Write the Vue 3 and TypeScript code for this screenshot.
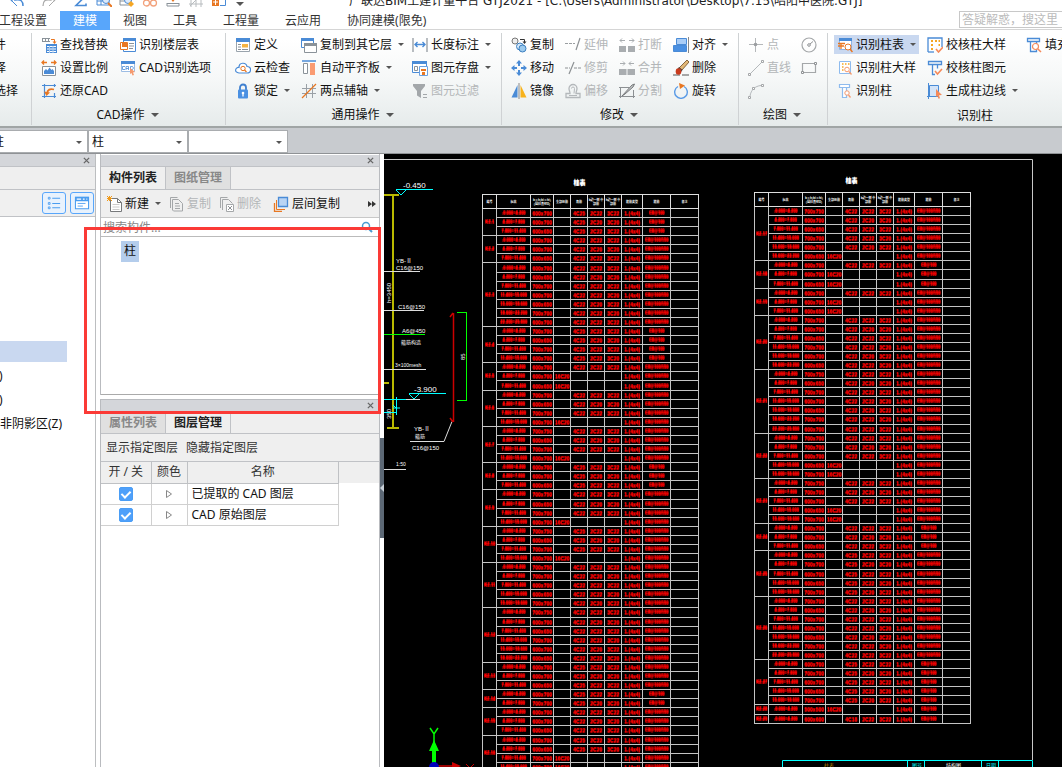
<script setup lang="ts">
import { ref } from 'vue'

interface Tool { icon: string; text?: string; arrow?: boolean; off?: boolean; on?: boolean }
interface Group { key: string; title: string; arrow: boolean; cols: Tool[][] }
interface Row { label?: string; span?: number; cells: string[] }
type Def = [string, number, number[], string, string, string]

const B = '#4a8bd6'
const O = '#e87722'
const G = '#8a9299'
const L = '#b4b8bb'

const icons: Record<string, string> = {
  find: `<path d="M1 1.500h8M1 4.500h8M1.500 1v4M4.500 1v4M7.500 1v4" stroke="${G}" fill="none"/><path d="M10 2.500h3.500v3" stroke="${O}" fill="none"/><path d="M11.500 4.500h4l-2 2.500z" fill="${O}"/><path d="M5 7h11v9H5z" fill="${B}"/><path d="M6 9.500h9M6 12h9M6 14.500h9" stroke="#fff"/><path d="M8.500 9v7M12 9v7" stroke="#a9cbf0"/>`,
  scale: `<path d="M1 2.500h5M10 2.500h5M3 .5l-2 2 2 2M13 .5l2 2-2 2" stroke="${O}" fill="none" stroke-width="1.300"/><path d="M1.500 15.500v-9h13v9z" fill="#fff" stroke="${G}"/><path d="M3 14v-3l2-2 1.500 1.500 2-3 2 2.500 1-1 1.500 2v3z" fill="${B}"/>`,
  restore: `<path d="M3.500 1v14M1 2.500h14M1 13.500h14M13.500 1v3M13.500 10v5" stroke="${B}" stroke-width="1.200" fill="none"/><path d="M13 6.500c-4-1-6.500 0-7 4" stroke="${O}" stroke-width="1.800" fill="none"/><path d="M3 8.500l6 1-3.500 3.500z" fill="${O}"/>`,
  floors: `<path d="M3.500 1.500h12v13h-12z" fill="#fff" stroke="${B}"/><path d="M3 1h13v3H3z" fill="${B}"/><path d="M.5 5.500h7v7h-7z" fill="#fff" stroke="${O}"/><path d="M2 5h5v5H2z" fill="${O}"/><path d="M9 6.500h5M9 9h5M9 11.500h4" stroke="${G}"/>`,
  cadopt: `<path d="M1.500 1.500h13v10h-13z" fill="#fff" stroke="#9dbde4"/><path d="M1 1h14v3H1z" fill="${B}"/><path d="M5 6.500H2.500v3H5M6 10V6.500h2.500V10M6 8.500h2.500M10.500 6.500v3h2l1-1.500-1-1.500z" stroke="${B}" stroke-width=".8" fill="none"/><path d="M10 8l5 4-2 .5 1 2.500-1.500.5-1-2.500-1.500 1z" fill="#f59a6f"/>`,
  define: `<path d="M1.500 2.500h13v12h-13z" fill="#fff" stroke="#9aa4ad"/><path d="M1 1h14v4H1z" fill="${B}"/><path d="M3 7.500h3M3 10h3M3 12.500h3" stroke="${G}"/><path d="M7 7h6v3.500H7z" fill="#f5b342"/><path d="M7 12.500h6" stroke="${G}"/>`,
  cloud: `<path d="M4 13c-5-.3-4-6 0-5.500C4 2 11 2 12 6.500c5 0 4.500 6.500 0 6.500z" fill="#fff" stroke="${B}" stroke-width="1.200"/><circle cx="8" cy="8.500" r="2.200" fill="none" stroke="${O}"/><path d="M9.500 10l2 2" stroke="${O}" stroke-width="1.300"/>`,
  lock: `<path d="M5 7V4.500a3 3 0 0 1 6 0V7" fill="none" stroke="#3f7fcf" stroke-width="1.800"/><rect x="3" y="6.500" width="10" height="9" rx="1" fill="#4a90e2"/><circle cx="8" cy="10" r="1.300" fill="#fff"/><path d="M8 10v3.500" stroke="#fff" stroke-width="1.300"/>`,
  copyfl: `<path d="M.5 1.500h12v9H.5z" fill="#fff" stroke="${B}"/><path d="M0 1h13v3H0z" fill="${B}"/><path d="M3.500 6.500h12v9h-12z" fill="#fff" stroke="${G}"/><path d="M3 6h13v3H3z" fill="${G}"/>`,
  slab: `<path d="M1 1h14" stroke="${B}" stroke-width="1.500"/><path d="M2.500 3.500h4v10h-4z" fill="#fff" stroke="${G}"/><path d="M9 3h5v12H9z" fill="#fa9b72"/>`,
  axis: `<path d="M5.500 1v14M11.500 1v14M1 5.500h14M1 10.500h14" stroke="#9aa0a6"/><path d="M1 15L15 1" stroke="${O}" stroke-width="1.200"/>`,
  dim: `<path d="M1 1v14M15 1v14" stroke="${G}" stroke-width="1.200"/><path d="M3 7.500h10M5.500 5L3 7.500 5.500 10M10.500 5L13 7.500 10.500 10" stroke="${B}" fill="none" stroke-width="1.400"/>`,
  save: `<path d="M.5 1.500h14v11H.5z" fill="#fff" stroke="${B}"/><path d="M0 1h15v3H0z" fill="${B}"/><path d="M2.500 6.500h3v4h-3z" fill="none" stroke="${G}"/><path d="M7.500 6.500h8v9h-8z" fill="#fff" stroke="#6aa0e0"/><path d="M9 9h5v2H9zM10 12h3v3h-3z" fill="${O}"/>`,
  filter: `<path d="M1 1h12v2L9 8v7l-4-2.500V8L1 3z" fill="#a3a7aa"/><path d="M11 11.500h4M11 14.500h4" stroke="#a3a7aa"/>`,
  copy: `<circle cx="4" cy="4" r="3" fill="#eee" stroke="#777"/><path d="M9 2.500h4.500V5" stroke="#333" fill="none"/><path d="M11.500 4.500h4l-2 2.500z" fill="#333"/><circle cx="9" cy="9.500" r="3.500" fill="#d6e9fa" stroke="#3c7fc0"/><circle cx="11.500" cy="11.500" r="3.500" fill="#9dcbee" stroke="#3c7fc0"/>`,
  move: `<path d="M8 0l3 3.500H9V6H7V3.500H5zM8 16l3-3.500H9V10H7v2.500H5zM0 8l3.500-3v2H6v2H3.500v2zM16 8l-3.500-3v2H10v2h2.500v2z" fill="${B}"/>`,
  mirror: `<path d="M6.500 2v12.500H.5z" fill="${B}"/><path d="M8 0v16" stroke="#888"/><path d="M9.500 2v12.500h6z" fill="#f7b21b"/>`,
  extend: `<path d="M0 6.500h10" stroke="#9a9ea1" stroke-dasharray="3 1"/><path d="M15 1L11 13" stroke="#8c9093" stroke-width="1.200"/>`,
  trim: `<path d="M0 8h5M9 8h7" stroke="#8c9093" stroke-dasharray="3 1"/><path d="M9 2L4 14" stroke="#8c9093" stroke-width="1.200"/>`,
  offset: `<path d="M1 14.500v-4h4c0-2-1-3-1-5a4 4 0 0 1 8 0c0 2-1 3-1 5h4v4z" fill="none" stroke="${L}" stroke-width="1.300"/><path d="M4 12.500h8M6.500 5.500a1.500 1.500 0 0 1 3 0c0 2-.5 3-.5 5" fill="none" stroke="${L}"/>`,
  brk: `<path d="M0 9h7v6H0zM9 9h7v6H9z" fill="#a9adb0"/><path d="M1 3.500h5M10 3.500h5M3 1.500l-2 2 2 2M13 1.500l2 2-2 2" stroke="#a9adb0" fill="none"/>`,
  merge: `<path d="M0 9h7.500v6H0zM8.500 9H16v6H8.500z" fill="#a9adb0"/><path d="M1 3.500h5M10 3.500h5M4 1.500l2 2-2 2M12 1.500l-2 2 2 2" stroke="#a9adb0" fill="none"/>`,
  split: `<path d="M0 4.500h10M0 13.500h16M1.500 4v11M14.500 7v8" stroke="#8c9093" fill="none"/><path d="M3 13L13 2l2.500-1L14 4 6 11z" fill="#c4c7c9" stroke="#77797b"/>`,
  align: `<path d="M3.500 1.500h10v6h-10z" fill="#a9cdf7" stroke="${B}"/><path d="M.5 8.500h13v6H.5z" fill="#4a90e2" stroke="${B}"/><path d="M15.500 0v16" stroke="#888"/>`,
  erase: `<path d="M0 15h16" stroke="#555" stroke-dasharray="7 2"/><path d="M14 0l2 2-7 8-3-2z" fill="#e2b877" stroke="#6b4a22" stroke-width=".8"/><path d="M6 7l3.500 3L8 12 4.500 9z" fill="#444"/><ellipse cx="5.500" cy="11.500" rx="2.800" ry="3.200" fill="#c93a1c"/>`,
  rotate: `<path d="M11 3.500A6.300 6.300 0 1 1 5 3.500" fill="none" stroke="#5a9be6" stroke-width="1.400"/><path d="M6 0l6 2.500L7 6z" fill="${O}"/>`,
  point: `<path d="M7.500 1v14M1 7.500h14" stroke="#b5b8ba"/><circle cx="7.500" cy="7.500" r="1.800" fill="#9b9ea1"/>`,
  line: `<path d="M2 14L14 2" stroke="${L}"/><path d="M.5 13.500h2v2h-2zM13.500.5h2v2h-2z" fill="#fff" stroke="#a4a7a9"/>`,
  arc: `<path d="M2 13C3 7 7 3 13 2.500" stroke="${L}" fill="none"/><path d="M.5 13.500h2v2h-2zM4.500 4.500h2v2h-2zM13.500 1.500h2v2h-2z" fill="#fff" stroke="#a4a7a9"/>`,
  circle: `<circle cx="8" cy="8" r="7" fill="none" stroke="#a4a7a9" stroke-width="1.200"/><circle cx="8" cy="8" r="1.300" fill="none" stroke="#8f9295"/><path d="M9 7l3-2.500" stroke="#8f9295"/>`,
  rect: `<path d="M1.500 3.500h13v9h-13z" fill="none" stroke="#a4a7a9" stroke-width="1.200"/><path d="M.5 11.500h2v2h-2zM13.500 2.500h2v2h-2z" fill="#fff" stroke="#8f9295"/>`,
  idtable: `<path d="M2.500 1.500h12v11h-12z" fill="#fff" stroke="#8fb4e2"/><path d="M2 1h13v3H2z" fill="${B}"/><path d="M1 6.500h7M1 9h6M4 6v6" stroke="${O}" stroke-width="1.300"/><circle cx="11" cy="10" r="3" fill="#fff" stroke="${O}"/><path d="M13 12l2.500 3" stroke="${O}" stroke-width="1.500"/>`,
  iddetail: `<path d="M2.500 1.500h11v12h-11z" fill="#fff" stroke="#8ebbee"/><path d="M5 4h1.500M8 4h1.500M11 4h1.500M5 7h1.500M5 10h1.500" stroke="#f5a623" stroke-width="1.500"/><circle cx="10" cy="9.500" r="2.300" fill="#fff" stroke="#f59a6f"/><path d="M12 11.500l2.500 3" stroke="#f59a6f" stroke-width="1.300"/>`,
  idcol: `<path d="M2.500 1.500h10v3h-10zM5.500 4.500h4v10h-4z" fill="#fff" stroke="#8ebbee" stroke-width="1.200"/><circle cx="10" cy="10" r="2.200" fill="#fff" stroke="#f59a6f"/><path d="M11.500 12l2 2.500" stroke="#f59a6f" stroke-width="1.300"/>`,
  ckdetail: `<path d="M1 15V1h14v9" fill="none" stroke="${B}" stroke-width="1.300"/><path d="M1 15h6" stroke="${B}" stroke-width="1.300"/><path d="M4 4h2M8 4h2M11.500 4h1.500M4 8h2M11.500 8H13M4 12h2" stroke="#f5a623" stroke-width="2"/><path d="M9 12l2.500 3L16 10" fill="none" stroke="#f58a5a" stroke-width="1.600"/>`,
  ckelem: `<path d="M1.500 1.500h13v3h-13zM10.500 4.500v4M5.500 4.500v10H8" fill="none" stroke="${B}" stroke-width="1.300"/><path d="M8 11l2.500 3L15 9" fill="none" stroke="#f58a5a" stroke-width="1.600"/>`,
  edge: `<path d="M2.500 2.500h9v11h-9z" fill="#d3e4f8" stroke="${B}"/><path d="M1.500 0v16M0 13.500h12" stroke="${B}"/><path d="M9 6l6 6-3 .3 1 3-1.500.5-1.200-3L9 14z" fill="#f58a5a"/>`,
  fill: `<path d="M1.500 1.500h12v3h-12zM4.500 4.500h6v10h-6z" fill="#fff" stroke="${B}" stroke-width="1.300"/><circle cx="9.500" cy="9.500" r="3" fill="#fff" stroke="#f58a5a" stroke-width="1.200"/><path d="M12 12l3 3" stroke="#f58a5a" stroke-width="1.500"/>`,
  newdoc: `<path d="M3.500 2.500h7l4 4v9h-11z" fill="#fff" stroke="#77797b"/><path d="M10.500 2.500v4h4" fill="none" stroke="#77797b"/><path d="M5.500 8.500h7M5.500 11h7M5.500 13.500h7" stroke="#ccc"/><path d="M0 0l5 5M5 0L0 5M2.500 0v5M0 2.500h5" stroke="#f09a1a"/>`,
  dup: `<path d="M1.500 12V1.500h7M3.500 14V3.500h6l4 4V15h-9z" fill="none" stroke="#a4a7a9"/><path d="M6 7.500h4M6 10h5M6 12.500h5" stroke="#a4a7a9"/>`,
  del: `<path d="M1.500 12V1.500h7M3.500 14V3.500h6l4 4" fill="none" stroke="#a4a7a9"/><path d="M7.500 8.500h7v7h-7z" fill="#fff" stroke="#a4a7a9"/><path d="M9 10l4 4M13 10l-4 4" stroke="#8f9295"/>`,
  layer: `<path d="M1.500 7v8.500H9" fill="none" stroke="${O}" stroke-width="1.300"/><path d="M3.500 4v9.500H12" fill="none" stroke="${O}"/><path d="M5.500 1.500h9v9h-9z" fill="#b9d4f4" stroke="${B}" stroke-width="1.300"/>`,
  undo: `<path d="M2 10l4-4v3c6-1 8 1 8 6" fill="none" stroke="${B}" stroke-width="1.500"/><path d="M3 10l5 5" stroke="${B}"/>`,
  redo: `<path d="M14 10l-4-4v3c-6-1-8 1-8 6" fill="none" stroke="#aaa" stroke-width="1.300"/><path d="M13 10l-5 5" stroke="#aaa"/>`,
  sum: `<path d="M13 3H4l5 5.500-6 6h10v-2" fill="none" stroke="${B}" stroke-width="1.600"/>`,
  view: `<path d="M1 3h12v11H1zM1 10h12M5 3v11" fill="none" stroke="${B}"/><circle cx="10" cy="9" r="3.500" fill="#dbe9fa" stroke="${B}"/><path d="M12 12l4 4" stroke="${O}" stroke-width="2"/>`,
  view2: `<path d="M1 3h11v11H1zM1 10h6" fill="none" stroke="${G}"/><circle cx="9" cy="9" r="3.500" fill="#dbe9fa" stroke="${B}"/><path d="M12 10l3 3-3 3-3-3z" fill="#f5a623"/>`,
  glasses: `<circle cx="4.500" cy="12" r="3" fill="none" stroke="#f2a27c" stroke-width="1.300"/><circle cx="11.500" cy="12" r="3" fill="none" stroke="#f2a27c" stroke-width="1.300"/>`,
  tray: `<path d="M2 12.500h12M2 15h12M2 12v3M14 12v3" stroke="${G}"/><path d="M5 7h6l-3 4z" fill="${O}"/>`,
  grid: `<path d="M1 3h14M1 8h14M1 13h14M3 1v15M8 1v15M13 1v15M2 15L14 3" stroke="#b8bcbf" fill="none"/>`,
  layout: `<path d="M1 6h7v9H1z" fill="${O}"/><path d="M2 11h5M4.500 8v6" stroke="#fff"/><path d="M9 14.500h5.500V4" stroke="${B}" fill="none"/>`,
  list: `<path d="M1.500 1.500h2v2h-2zM1.500 7.500h2v2h-2zM1.500 12.500h2v2h-2z" fill="none" stroke="#4a9df0"/><path d="M6 2.500h9M6 8.500h9M6 13.500h9" stroke="#4a9df0" stroke-width="1.200"/>`,
  card: `<path d="M.5 1.500h15v13H.5z" fill="#fff" stroke="#4a9df0" stroke-width="1.200"/><path d="M0 1h16v5H0z" fill="#4a9df0"/><path d="M2 3.500h5M9 3.500h2M13 3.500h1" stroke="#fff" stroke-width="1.300"/><path d="M3 8.500h9M3 11.500h6" stroke="#4a9df0"/>`
}

const quick = ['undo', 'redo', 'sum', 'view', 'view2', 'glasses', 'tray', 'grid', 'layout']
const tabs = ['工程设置', '建模', '视图', '工具', '工程量', '云应用', '协同建模(限免)']
const tab = ref('建模')

const groups: Group[] = [
  { key: 'cad', title: 'CAD操作', arrow: true, cols: [
    [{ icon: 'find', text: '查找替换' }, { icon: 'scale', text: '设置比例' }, { icon: 'restore', text: '还原CAD' }],
    [{ icon: 'floors', text: '识别楼层表' }, { icon: 'cadopt', text: 'CAD识别选项' }]] },
  { key: 'common', title: '通用操作', arrow: true, cols: [
    [{ icon: 'define', text: '定义' }, { icon: 'cloud', text: '云检查' }, { icon: 'lock', text: '锁定', arrow: true }],
    [{ icon: 'copyfl', text: '复制到其它层', arrow: true }, { icon: 'slab', text: '自动平齐板', arrow: true }, { icon: 'axis', text: '两点辅轴', arrow: true }],
    [{ icon: 'dim', text: '长度标注', arrow: true }, { icon: 'save', text: '图元存盘', arrow: true }, { icon: 'filter', text: '图元过滤', off: true }]] },
  { key: 'modify', title: '修改', arrow: true, cols: [
    [{ icon: 'copy', text: '复制' }, { icon: 'move', text: '移动' }, { icon: 'mirror', text: '镜像' }],
    [{ icon: 'extend', text: '延伸', off: true }, { icon: 'trim', text: '修剪', off: true }, { icon: 'offset', text: '偏移', off: true }],
    [{ icon: 'brk', text: '打断', off: true }, { icon: 'merge', text: '合并', off: true }, { icon: 'split', text: '分割', off: true }],
    [{ icon: 'align', text: '对齐', arrow: true }, { icon: 'erase', text: '删除' }, { icon: 'rotate', text: '旋转' }]] },
  { key: 'draw', title: '绘图', arrow: true, cols: [
    [{ icon: 'point', text: '点', off: true }, { icon: 'line', text: '直线', off: true }, { icon: 'arc', off: true }],
    [{ icon: 'circle', off: true }, { icon: 'rect', off: true }]] },
  { key: 'column', title: '识别柱', arrow: false, cols: [
    [{ icon: 'idtable', text: '识别柱表', arrow: true, on: true }, { icon: 'iddetail', text: '识别柱大样' }, { icon: 'idcol', text: '识别柱' }],
    [{ icon: 'ckdetail', text: '校核柱大样' }, { icon: 'ckelem', text: '校核柱图元' }, { icon: 'edge', text: '生成柱边线', arrow: true }],
    [{ icon: 'fill', text: '填充' }]] }
]

const layers = ref([
  { name: '已提取的 CAD 图层', on: true },
  { name: 'CAD 原始图层', on: true }
])

const heads = ['编号', '标高', 'b×h(bi×hi) (圆柱直径D)', '全部纵筋', '角筋', 'b边一侧 中部筋', 'h边一侧 中部筋', '箍筋类型', '箍筋', '备注']
const levels = ['-0.000~4.200', '4.200~7.800', '7.800~11.400', '11.400~15.000', '15.000~18.600', '18.600~22.200', '22.200~25.800']
const sizes = ['700x700', '600x700', '600x650']

function build(defs: Def[]): Row[] {
  return defs.flatMap(([label, count, single, size, corner, hoop]) =>
    Array.from({ length: count }, (_, i): Row => {
      const one = single.includes(i)
      const bars = one ? ['16C20', '', '', ''] : ['', corner, i % 3 === 1 ? '2C20' : '2C22', i % 2 ? '3C20' : '3C22']
      return {
        label: i === 0 ? label : undefined,
        span: count,
        cells: [levels[i], i === 0 ? size : sizes[(i + count) % 3], ...bars, '1.(4x4)', hoop, '']
      }
    }))
}

const S = 'C8@100'
const W = 'C8@100/150'
const left = build([
  ['KZ-1', 3, [], '600x700', '4C25', S], ['KZ-2', 3, [], '600x700', '4C22', W], ['KZ-3', 7, [], '600x700', '4C22', W],
  ['KZ-4', 4, [], '700x700', '4C25', S], ['KZ-5', 3, [1, 2], '600x700', '4C22', W], ['KZ-6', 4, [3], '700x700', '4C22', W],
  ['KZ-7', 4, [3], '700x750', '4C22', W], ['KZ-8', 3, [], '600x700', '4C25', S], ['KZ-9', 4, [3], '700x750', '4C22', W],
  ['KZ-10', 4, [3], '700x750', '4C25', W], ['KZ-11', 5, [], '700x750', '4C22', W], ['KZ-12', 6, [], '700x750', '4C22', W],
  ['KZ-13', 3, [], '600x700', '4C25', W], ['KZ-14', 2, [], '600x700', '4C25', S], ['KZ-15', 3, [], '600x700', '4C22', W],
  ['KZ-16', 4, [2, 3], '650x700', '4C25', W]
])
const right = build([
  ['KZ-17', 6, [5], '700x750', '4C22', W], ['KZ-18', 3, [1, 2], '600x700', '4C22', S], ['KZ-19', 3, [1, 2], '600x700', '4C22', W],
  ['KZ-20', 6, [], '700x700', '4C22', W], ['KZ-21', 7, [], '700x750', '4C22', W], ['KZ-22', 5, [3, 4], '700x700', '4C22', W],
  ['KZ-23', 5, [3, 4], '700x750', '4C22', W], ['KZ-24', 3, [], '600x700', '4C22', S], ['KZ-25', 5, [], '600x700', '4C25', W],
  ['KZ-26', 7, [], '700x700', '4C22', W], ['KZ-27', 5, [], '600x700', '4C25', S], ['KZ-28', 1, [0], '500x500', '', S],
  ['KZ-29', 1, [], '600x600', '4C18', S]
])
const schedules = [{ key: 'plan-a', rows: left }, { key: 'plan-b', rows: right }]
const kinds = ['lv', 'sz', 'sz', 'sz', 'sz', 'sz', 'sz', 'lv', 'lv']
</script>

<template>
  <div class="app">
    <header class="title">
      <div class="quick">
        <button v-for="q in quick" :key="q" type="button" :aria-label="q"><svg viewBox="0 0 16 16" v-html="icons[q]" /></button>
        <i class="caret" />
      </div>
      <span class="name">广联达BIM土建计量平台 GTJ2021 - [C:\Users\Administrator\Desktop\7.15\昭阳中医院.GTJ]</span>
    </header>

    <nav class="tabs">
      <button v-for="t in tabs" :key="t" type="button" :class="{ active: t === tab }" @click="tab = t">{{ t }}</button>
      <input type="text" class="ask" placeholder="答疑解惑，搜这里" aria-label="答疑解惑">
    </nav>

    <div class="ribbon">
      <section class="group cut">
        <div class="tools"><div class="col">
          <button type="button" class="tool">件</button>
          <button type="button" class="tool">择</button>
          <button type="button" class="tool">选择</button>
        </div></div>
      </section>
      <section v-for="g in groups" :key="g.key" class="group" :class="g.key">
        <div class="tools">
          <div v-for="(c, ci) in g.cols" :key="ci" class="col">
            <button v-for="b in c" :key="b.icon" type="button" class="tool" :class="{ on: b.on }" :disabled="b.off" :aria-label="b.text || b.icon">
              <svg viewBox="0 0 16 16" v-html="icons[b.icon]" /><span v-if="b.text">{{ b.text }}</span><i v-if="b.arrow" class="caret" />
            </button>
          </div>
        </div>
        <div class="caption">{{ g.title }}<i v-if="g.arrow" class="caret big" /></div>
      </section>
    </div>

    <div class="pickers">
      <label class="pick lead"><select aria-label="构件大类"><option>柱</option></select><i class="caret" /></label>
      <label class="pick"><select aria-label="构件类型"><option>柱</option></select><i class="caret" /></label>
      <label class="pick"><select aria-label="构件"><option></option></select><i class="caret" /></label>
    </div>

    <main class="body">
      <aside class="nav">
        <div class="bar"><button type="button" aria-label="关闭"><svg viewBox="0 0 8 8"><path d="M1 1l6 6M7 1L1 7" /></svg></button></div>
        <div class="blank" />
        <div class="modes">
          <button type="button" aria-label="列表"><svg viewBox="0 0 16 16" v-html="icons.list" /></button>
          <button type="button" aria-label="卡片"><svg viewBox="0 0 16 16" v-html="icons.card" /></button>
        </div>
        <ul class="tree">
          <li class="sel" /><li>)</li><li>)</li><li>非阴影区(Z)</li>
        </ul>
      </aside>

      <div class="docks">
        <section class="dock upper">
          <div class="bar"><button type="button" aria-label="关闭"><svg viewBox="0 0 8 8"><path d="M1 1l6 6M7 1L1 7" /></svg></button></div>
          <div class="subtabs"><button type="button" class="active">构件列表</button><button type="button">图纸管理</button></div>
          <div class="actions">
            <button type="button" class="tool"><svg viewBox="0 0 16 16" v-html="icons.newdoc" /><span>新建</span><i class="caret" /></button>
            <button type="button" class="tool" disabled><svg viewBox="0 0 16 16" v-html="icons.dup" /><span>复制</span></button>
            <button type="button" class="tool" disabled><svg viewBox="0 0 16 16" v-html="icons.del" /><span>删除</span></button>
            <button type="button" class="tool wide"><svg viewBox="0 0 16 16" v-html="icons.layer" /><span>层间复制</span></button>
            <button type="button" class="more" aria-label="更多"><svg viewBox="0 0 8 6"><path d="M0 0l4 3-4 3zM4 0l4 3-4 3z" fill="#333" /></svg></button>
          </div>
          <div class="search">
            <input type="text" placeholder="搜索构件..." aria-label="搜索构件">
            <svg viewBox="0 0 12 12"><circle cx="5" cy="5" r="3.500" fill="none" stroke="#4a9bd0" stroke-width="1.500" /><path d="M8 8l3 3" stroke="#4a9bd0" stroke-width="2" /></svg>
          </div>
          <div class="items"><span>柱</span></div>
        </section>

        <section class="dock lower">
          <div class="bar"><button type="button" aria-label="关闭"><svg viewBox="0 0 8 8"><path d="M1 1l6 6M7 1L1 7" /></svg></button></div>
          <div class="subtabs"><button type="button">属性列表</button><button type="button" class="active">图层管理</button></div>
          <div class="links"><button type="button">显示指定图层</button><button type="button">隐藏指定图层</button></div>
          <div class="sheet">
            <table class="layers">
              <thead><tr><th class="c1">开 / 关</th><th class="c2">颜色</th><th class="c3">名称</th></tr></thead>
              <tbody>
                <tr v-for="l in layers" :key="l.name">
                  <td><input v-model="l.on" type="checkbox" :aria-label="l.name"></td>
                  <td><svg class="tri" viewBox="0 0 6 8"><path d="M.5.5L5.500 4 .5 7.500z" fill="#fff" stroke="#888" /></svg></td>
                  <td class="nm">{{ l.name }}</td>
                </tr>
              </tbody>
            </table>
          </div>
        </section>
        <div class="mark" />
      </div>

      <div class="sash"><button type="button" aria-label="收起"><svg viewBox="0 0 4 8"><path d="M4 0L0 4l4 4z" fill="#c8d0d8" /></svg></button></div>

      <div class="canvas">
        <svg class="drawing" fill="none">
          <path d="M0 5.500H648.500V606" stroke="#c8c8c8" />
          <g stroke="#b9b900" stroke-width="2"><path d="M0 41h15M9 41v233M3 274h12" /><path d="M0 229h5" /></g>
          <g stroke="#0ff"><path d="M12 35.500h37M12 36l5 5 5-5M25 239.500h37M25 240l5 5 5-5M0 245.500h22M12.500 243v18M0 258.500h12M9 251l3 3M9 254h7" /></g>
          <g stroke="#ddd"><path d="M0 117.500h36M0 156.500h40M0 215.500h42M22 245.500h14M26 287.500h34l8-20M0 315.500h22" /></g>
          <path d="M0 180.500h41M73 158.500h10M82.500 158v88M73 246.500h10" stroke="#0f0" />
          <path d="M69.500 159v109M66 163l3-4M66 264l3 4" stroke="#c00" stroke-width="1.500" />
          <g fill="#fff" class="big-note"><text x="19" y="34">-0.450</text><text x="30" y="238">-3.900</text></g>
          <g fill="#fff" class="note">
            <text x="12" y="109">YB-Ⅱ</text><text x="12" y="116">C16@150</text><text x="14" y="155">C16@150</text>
            <text x="18" y="179">A6@450</text><text x="30" y="277">YB-Ⅱ</text><text x="28" y="296">C16@150</text>
            <text transform="translate(7 149) rotate(-90)">h=3450</text><text transform="translate(7 265) rotate(-90)">350</text>
            <text transform="translate(81 206) rotate(-90)">85</text>
          </g>
          <g fill="#fff" class="tiny"><text x="17" y="190">箍筋构造</text><text x="11" y="213">3×100mesh</text><text x="31" y="284">箍筋</text><text x="12" y="312">1:50</text></g>
          <path d="M46 574l4 6 4-6M50 580v8" stroke="#0f0" stroke-width="1.500" />
          <path d="M50 586l5 11h-3v15h-4v-15h-3z" fill="#0f0" />
          <path d="M54 612h16" stroke="#900" stroke-width="2" /><path d="M68 608l9 4-9 4z" fill="#c00" /><path d="M82 610l8 8M90 610l-8 8" stroke="#c00" />
          <circle cx="50" cy="613" r="5" fill="#00b" />
          <path d="M398.500 613v-6.500h250v6.500M523.500 607v6M540.500 607v6M597.500 607v6M614.500 607v6" stroke="#0ff" />
          <g class="tiny"><text x="440" y="613" fill="#b08000">柱表</text><text x="528" y="613" fill="#0ff">图号</text><text x="562" y="613" fill="#fff">结构图</text><text x="602" y="613" fill="#0ff">日期</text></g>
        </svg>

        <table v-for="s in schedules" :key="s.key" class="schedule" :class="s.key">
          <caption>柱表</caption>
          <colgroup><col class="w14"><col class="w34"><col class="w23"><col class="w17"><col class="w17"><col class="w17"><col class="w17"><col class="w21"><col class="w28"><col class="w28"></colgroup>
          <thead><tr><th v-for="h in heads" :key="h">{{ h }}</th></tr></thead>
          <tbody>
            <tr v-for="(r, i) in s.rows" :key="i">
              <td v-if="r.label" class="lv" :rowspan="r.span">{{ r.label }}</td>
              <td v-for="(c, j) in r.cells" :key="j" :class="kinds[j]">{{ c }}</td>
            </tr>
          </tbody>
        </table>
      </div>
    </main>
  </div>
</template>

<style>
html, body { margin: 0; height: 100%; overflow: hidden; background: #fff; }
</style>

<style scoped>
* { box-sizing: border-box; }
.app { display: flex; flex-direction: column; height: 100vh; overflow: hidden; background: #fff; color: #111; font: 12px/16px "Noto Sans", "Noto Sans CJK SC", sans-serif; }
button, input, select { font: inherit; color: inherit; margin: 0; padding: 0; border: 0; background: none; border-radius: 0; }
button { white-space: nowrap; }
svg { display: block; flex: none; }
.caret { display: inline-block; flex: none; border: 3px solid transparent; border-top-color: #555; border-bottom: 0; }
.caret.big { border-width: 4px; border-bottom: 0; margin-left: 6px; vertical-align: 2px; }

.title { position: relative; display: flex; align-items: flex-end; flex: none; height: 11px; overflow: hidden; padding-bottom: 2px; }
.quick { display: flex; align-items: flex-end; gap: 7px; width: 349px; padding: 0 0 2px 9px; flex: none; }
.quick svg { width: 16px; height: 16px; }
.quick button:nth-child(-n+2) { margin-right: 9px; }
.quick .caret { margin: 0 0 1px 2px; border-width: 4px; border-bottom: 0; }
.name { white-space: nowrap; color: #222; font-family: "DejaVu Sans", "Noto Sans CJK SC", sans-serif; }

.tabs { display: flex; flex: none; height: 19px; border-bottom: 1px solid #d5d5d5; }
.tabs button { padding: 0 13px; height: 19px; line-height: 18px; color: #333; }
.tabs button:first-child { padding-left: 0; margin-left: -1px; }
.tabs button.active { background: #58a6fb; color: #fff; }
.ask { margin-left: auto; width: 103px; height: 17px; padding-left: 2px; border: 1px solid #c8c8c8; border-right: 0; }
.ask::placeholder { color: #bbb; }

.ribbon { display: flex; flex: none; height: 98px; padding-top: 3px; overflow: hidden; background: linear-gradient(#fff 10%, #f6f8f8 50%, #e6ebeb); border-bottom: 2px solid #a0a5a5; }
.group { display: flex; flex-direction: column; flex: none; height: 92px; border-right: 1px solid #cfd2d4; padding-left: 9px; }
.tools { display: flex; height: 69px; }
.col { display: flex; flex-direction: column; }
.tool { display: flex; align-items: center; gap: 3px; height: 23px; }
.tool svg { width: 16px; height: 16px; }
.tool:disabled { color: #b3b6b8; }
.tool .caret { margin-left: 3px; }
.caption { flex: 1; line-height: 25px; text-align: center; margin-left: -9px; padding-right: 2px; white-space: nowrap; }
.cut { width: 32px; padding: 0; }
.cut .col { margin-left: -6px; }
.cad { width: 194px; }
.cad .col:first-child { width: 79px; }
.common { width: 276px; }
.common .col:first-child { width: 66px; }
.common .col:nth-child(2) { width: 111px; }
.modify { width: 237px; }
.modify .col { width: 54px; }
.draw { width: 89px; }
.draw .col:first-child { width: 53px; }
.column { flex: 1 0 auto; border-right: 0; }
.column .col { width: 90px; }
.column .col:nth-child(2) { width: 99px; }
.column .caption { width: 296px; line-height: 28px; }
.tool.on { background: #c9d8f0; height: 19px; margin: 2px 0 2px -3px; padding-left: 3px; width: 85px; }

.pickers { display: flex; flex: none; height: 26px; padding-top: 2px; background: #c8cbcf; border-bottom: 1px solid #8f9295; }
.pick { position: relative; width: 100px; height: 23px; border: 1px solid #a9acaf; background: #fff; }
.pick.lead { margin-left: -12px; }
.pick select { appearance: none; width: 100%; height: 21px; padding-left: 3px; }
.pick .caret { position: absolute; right: 5px; top: 10px; }

.body { display: flex; flex: 1; min-height: 0; }
.bar { display: flex; justify-content: flex-end; align-items: center; height: 12px; padding-right: 5px; background: #d4d6da; }
.bar svg { width: 7px; height: 7px; fill: none; stroke: #666; stroke-width: 1.5; }
.nav { width: 96px; flex: none; border-right: 1px solid #bcbec0; }
.nav .bar { height: 13px; border-bottom: 1px solid #c0c2c6; }
.blank { height: 23px; background: #efefef; border-bottom: 1px solid #c0c2c6; }
.modes { display: flex; justify-content: flex-end; gap: 4px; height: 27px; padding: 2px 1px 0 0; background: #f0f0f0; border-bottom: 1px solid #c0c2c6; }
.modes button { width: 24px; height: 22px; padding: 3px; border: 1px solid #58a6fb; border-radius: 3px; background: #e8f2fd; }
.modes svg { width: 16px; height: 14px; }
.tree { list-style: none; margin: 124px 0 0; padding: 0; }
.tree li { height: 24px; line-height: 24px; white-space: nowrap; }
.tree li:nth-child(2), .tree li:nth-child(3) { margin-left: -1px; }
.tree .sel { width: 67px; height: 21px; margin: 0 0 2px; background: #c9d8f0; }

.docks { position: relative; display: flex; flex-direction: column; flex: none; width: 280px; margin-left: 4px; }
.dock { border: 1px solid #b9bbbf; border-width: 0 1px; }
.dock .bar { border-bottom: 1px solid #c0c2c6; }
.upper { padding-top: 1px; }
.subtabs { display: flex; height: 23px; background: #efefef; border-bottom: 1px solid #c0c2c6; }
.subtabs button { width: 65px; font-weight: bold; color: #888; background: #e0e0e0; border-right: 1px solid #c0c2c6; }
.subtabs button.active { color: #222; background: #efefef; }
.actions { display: flex; align-items: center; height: 28px; gap: 8px; padding: 0 3px 0 6px; background: #efefef; border-bottom: 1px solid #c8c8c8; }
.actions .tool { gap: 2px; }
.actions .tool .caret { margin-left: 4px; }
.actions .wide { gap: 3px; margin-left: 4px; }
.more { margin-left: auto; }
.more svg { width: 8px; height: 6px; }
.search { display: flex; align-items: center; height: 19px; border-bottom: 1px solid #bbb; padding-right: 6px; }
.search input { flex: 1; min-width: 0; height: 18px; padding-left: 2px; }
.search input::placeholder { color: #888; }
.search svg { width: 12px; height: 12px; }
.items { height: 158px; padding: 4px 0 0 20px; border-bottom: 1px solid #aaa; }
.items span { display: inline-block; padding: 2px 3px 3px; background: #b4cdec; }
.lower { flex: 1; margin-top: 4px; border-top: 1px solid #b9bbbf; }
.lower .subtabs { height: 22px; }
.links { display: flex; gap: 8px; align-items: center; height: 28px; padding-left: 5px; color: #333; background: #efefef; border-bottom: 1px solid #c0c2c6; }
.sheet { background: linear-gradient(#efefef 21px, #fff 21px); }
.layers { border-collapse: collapse; table-layout: fixed; width: 238px; font: inherit; color: inherit; }
.layers th, .layers td { height: 21px; padding: 0; line-height: 20px; border: 1px solid #d0d0d0; border-top: 0; text-align: center; }
.layers th { font-weight: normal; background: #efefef; color: #333; border-color: #bfc1c4; }
.layers th:first-child, .layers td:first-child { border-left: 0; }
.layers .nm { text-align: left; padding-left: 4px; }
.c1 { width: 50px; }
.c2 { width: 36px; }
.layers input { appearance: none; display: block; width: 14px; height: 14px; margin: 0 auto; border: 1px solid #4a9df5; border-radius: 2px; }
.layers input:checked { background: #4fa0fa; }
.layers input:checked::after { content: ""; display: block; width: 4px; height: 7px; margin: 1px auto 0; border: solid #fff; border-width: 0 2px 2px 0; transform: rotate(45deg); }
.tri { width: 6px; height: 8px; margin: 0 auto; }
.mark { position: absolute; left: -16px; top: 73px; width: 297px; height: 187px; border: 3px solid #fb3a36; pointer-events: none; z-index: 2; }

.sash { width: 4px; flex: none; padding-top: 284px; }
.sash button { display: block; width: 4px; height: 100px; background: #5c6875; }
.sash svg { width: 4px; height: 8px; }

.canvas { position: relative; flex: 1; overflow: hidden; background: #000; }
.drawing { position: absolute; inset: 0; width: 100%; height: 100%; }
.big-note { font: 8px "Liberation Sans", sans-serif; }
.note { font: 6px "Liberation Sans", "Noto Sans CJK SC", sans-serif; }
.tiny { font: 5px "Liberation Sans", "Noto Sans CJK SC", sans-serif; }
.schedule { position: absolute; border-collapse: collapse; table-layout: fixed; width: 216px; color: #f00; font: bold 5px/6px "Liberation Sans", sans-serif; }
.schedule caption { height: 22px; padding-right: 22px; color: #fff; font: bold 6px/20px "Noto Sans CJK SC", sans-serif; text-shadow: 0 1px #fff; }
.schedule th { height: 14px; padding: 0; border: 1px solid #ddd; color: #fff; font: bold 3px/4px "Noto Sans CJK SC", sans-serif; }
.schedule td { height: 8px; padding: 0; border: 1px solid #c4c4c4; text-align: center; white-space: nowrap; text-shadow: 0 1px #d00; }
.schedule .lv { font-size: 4px; text-shadow: 0 1px #f00, 0 -1px #f00; }
.schedule .sz { font-size: 5px; }
.plan-a { left: 98px; top: 18px; height: 578px; }
.plan-b { left: 370px; top: 16px; height: 532px; }
.w14 { width: 14px; }
.w34 { width: 34px; }
.w23 { width: 23px; }
.w17 { width: 17px; }
.w21 { width: 21px; }
.w28 { width: 28px; }
</style>
